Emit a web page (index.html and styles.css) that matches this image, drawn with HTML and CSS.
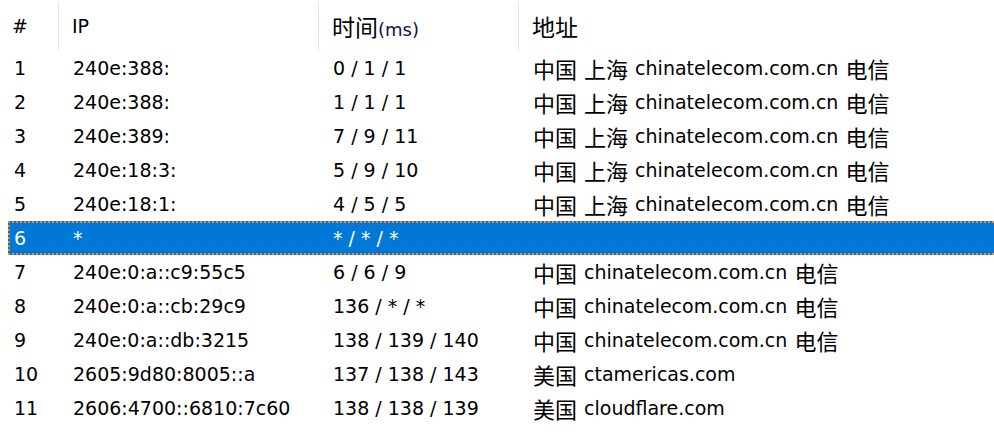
FILE: index.html
```html
<!DOCTYPE html>
<html>
<head>
<meta charset="utf-8">
<link rel="stylesheet" href="styles.css">
</head>
<body>
<div class="list">
  <div class="head">
    <div class="hc c1">#</div>
    <div class="hc c2">IP</div>
    <div class="hc c3"><span><span class="cjk">时间</span><span class="small">(ms)</span></span></div>
    <div class="hc c4"><span class="cjk">地址</span></div>
  </div>
  <div class="row"><div class="c1">1</div><div class="c2">240e:388:</div><div class="c3">0 / 1 / 1</div><div class="c4"><span class="cjk">中国</span> <span class="cjk">上海</span> chinatelecom.com.cn <span class="cjk">电信</span></div></div>
  <div class="row"><div class="c1">2</div><div class="c2">240e:388:</div><div class="c3">1 / 1 / 1</div><div class="c4"><span class="cjk">中国</span> <span class="cjk">上海</span> chinatelecom.com.cn <span class="cjk">电信</span></div></div>
  <div class="row"><div class="c1">3</div><div class="c2">240e:389:</div><div class="c3">7 / 9 / 11</div><div class="c4"><span class="cjk">中国</span> <span class="cjk">上海</span> chinatelecom.com.cn <span class="cjk">电信</span></div></div>
  <div class="row"><div class="c1">4</div><div class="c2">240e:18:3:</div><div class="c3">5 / 9 / 10</div><div class="c4"><span class="cjk">中国</span> <span class="cjk">上海</span> chinatelecom.com.cn <span class="cjk">电信</span></div></div>
  <div class="row"><div class="c1">5</div><div class="c2">240e:18:1:</div><div class="c3">4 / 5 / 5</div><div class="c4"><span class="cjk">中国</span> <span class="cjk">上海</span> chinatelecom.com.cn <span class="cjk">电信</span></div></div>
  <div class="row selected"><div class="c1">6</div><div class="c2">*</div><div class="c3">* / * / *</div><div class="c4"></div></div>
  <div class="row"><div class="c1">7</div><div class="c2">240e:0:a::c9:55c5</div><div class="c3">6 / 6 / 9</div><div class="c4"><span class="cjk">中国</span> chinatelecom.com.cn <span class="cjk">电信</span></div></div>
  <div class="row"><div class="c1">8</div><div class="c2">240e:0:a::cb:29c9</div><div class="c3">136 / * / *</div><div class="c4"><span class="cjk">中国</span> chinatelecom.com.cn <span class="cjk">电信</span></div></div>
  <div class="row"><div class="c1">9</div><div class="c2">240e:0:a::db:3215</div><div class="c3">138 / 139 / 140</div><div class="c4"><span class="cjk">中国</span> chinatelecom.com.cn <span class="cjk">电信</span></div></div>
  <div class="row"><div class="c1">10</div><div class="c2">2605:9d80:8005::a</div><div class="c3">137 / 138 / 143</div><div class="c4"><span class="cjk">美国</span> ctamericas.com</div></div>
  <div class="row"><div class="c1">11</div><div class="c2">2606:4700::6810:7c60</div><div class="c3">138 / 138 / 139</div><div class="c4"><span class="cjk">美国</span> cloudflare.com</div></div>
</div>
</body>
</html>
```

FILE: styles.css
```css
html, body {
  margin: 0;
  padding: 0;
  background: #ffffff;
}
body {
  width: 994px;
  height: 447px;
  overflow: hidden;
  font-family: Tahoma, "DejaVu Sans", "Noto Sans CJK SC", sans-serif;
  font-size: 19px;
  color: #000000;
}
.cjk {
  font-family: "Noto Sans CJK SC", sans-serif;
  font-size: 22px;
}
.head .cjk {
  font-size: 23px;
}
.small {
  font-size: 18px;
  color: #10104a;
}
.list {
  display: flex;
  flex-direction: column;
}
.head {
  display: grid;
  grid-template-columns: 59px 260px 200px 1fr;
  height: 51px;
}
.hc {
  margin-top: 2px;
  height: 48px;
  display: flex;
  align-items: center;
  padding-left: 13px;
  border-right: 1px solid #e5e5e5;
  box-sizing: border-box;
  white-space: nowrap;
}
.head .c1 { padding-left: 12px; }
.head .c4 { border-right: none; }
.row {
  display: grid;
  grid-template-columns: 51px 260px 200px 1fr;
  margin-left: 8px;
  height: 34px;
  white-space: nowrap;
}
.row > div {
  padding-left: 14px;
  height: 34px;
  line-height: 34px;
  overflow: hidden;
}
.row .c1 { padding-left: 6px; }
.row .cjk { vertical-align: top; line-height: 34px; }
.row .c4 { word-spacing: 1px; }
.selected {
  background-color: #0078d7;
  color: #ffffff;
  background-image:
    repeating-linear-gradient(90deg, #ff8728 0 2px, transparent 2px 4px),
    repeating-linear-gradient(90deg, #ff8728 0 2px, transparent 2px 4px),
    repeating-linear-gradient(180deg, #ff8728 0 2px, transparent 2px 4px);
  background-size: 100% 2px, 100% 2px, 2px 100%;
  background-position: 0 0, 0 100%, 0 0;
  background-repeat: no-repeat;
}
```
